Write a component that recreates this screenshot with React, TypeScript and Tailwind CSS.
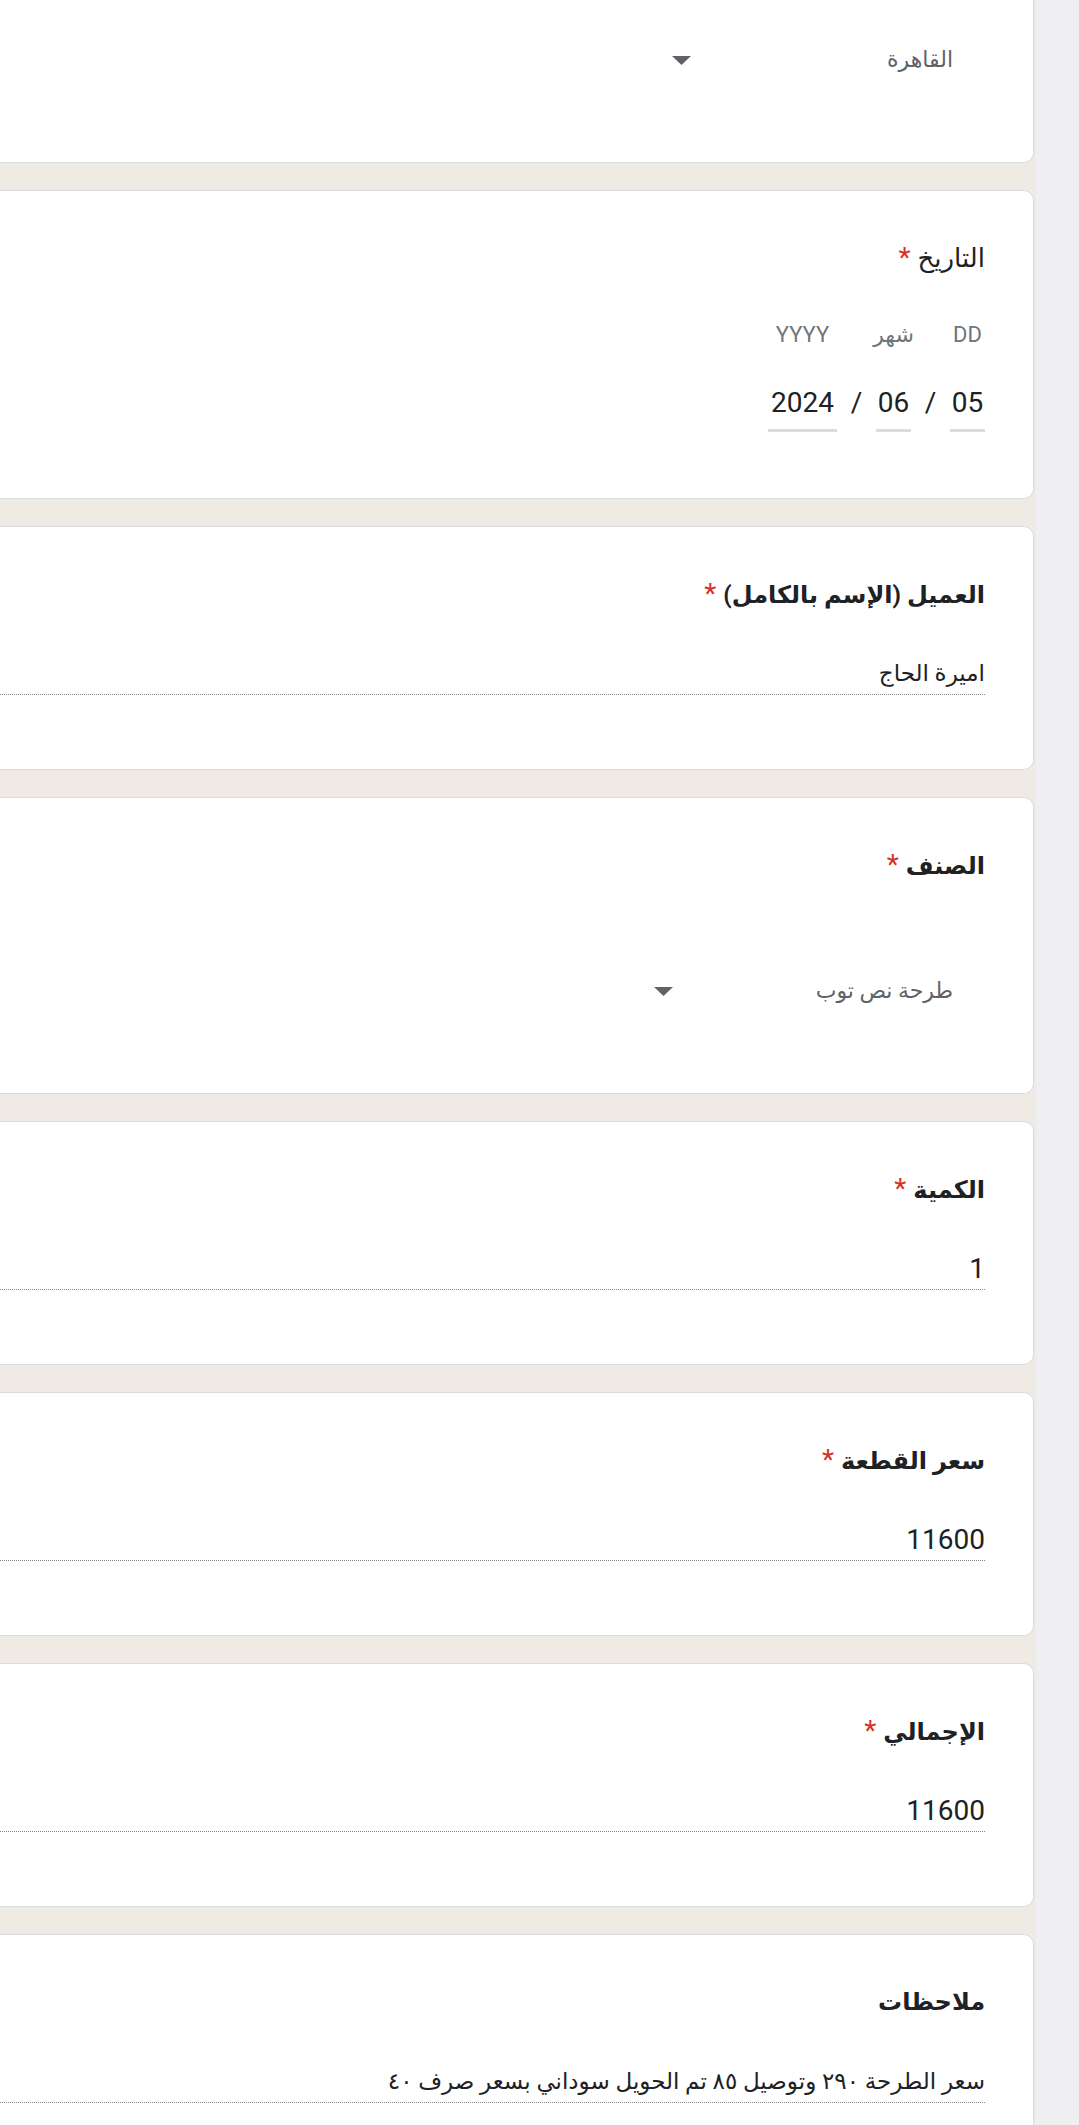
import React from "react"

const font = "font-['Roboto','DejaVu_Sans',sans-serif]"

function Star() {
    return <span className="text-[28px] font-normal text-[#d93025] font-['Roboto',sans-serif]"> *</span>
}

function Arrow() {
    return (
        <svg width="19" height="9" viewBox="0 0 19 9" className="shrink-0">
            <path d="M0 0 L19 0 L9.5 9 Z" fill="#5f6368" />
        </svg>
    )
}

function Dropdown({ value, width }: { value: string; width: string }) {
    return (
        <div className="flex h-[40px] items-center pr-[32px]">
            <span className={`${width} text-[22px] leading-[40px] text-[#5f6368]`}>{value}</span>
            <Arrow />
        </div>
    )
}

function Title({ text, required = true, bold = true }: { text: string; required?: boolean; bold?: boolean }) {
    return (
        <div className={`h-[40px] leading-[40px] text-[#202124] ${bold ? "text-[24px] font-bold" : "text-[26px] font-normal"}`}>
            {text}
            {required && <Star />}
        </div>
    )
}

function Card({ children, className = "" }: { children: React.ReactNode; className?: string }) {
    return (
        <div className={`mr-[2px] shrink-0 rounded-r-[10px] border-y border-r border-[#dadce0] bg-white pr-[48px] ${className}`}>
            {children}
        </div>
    )
}

function TextCard({ title, value, required = true, arabic = false }: { title: string; value: string; required?: boolean; arabic?: boolean }) {
    return (
        <Card className="h-[244px] pt-[47px]">
            <Title text={title} required={required} />
            <div className={`mt-[40px] h-[41px] border-b border-dotted border-[#80868b] leading-[40px] text-[#202124] ${arabic ? "text-[23px]" : "text-[28px]"}`}>
                {value}
            </div>
        </Card>
    )
}

function DatePart({ label, value, width }: { label: string; value: string; width: string }) {
    return (
        <div className={`flex flex-col items-center ${width}`}>
            <div className="h-[30px] text-[22px] leading-[30px] text-[#70757a]">{label}</div>
            <div className="mt-[32px] h-[42px] text-[28px] leading-[42px] text-[#202124]">{value}</div>
            <div className="mt-[5px] h-[3px] w-full bg-[#dadce0]" />
        </div>
    )
}

function Slash() {
    return (
        <div className="flex w-[39px] flex-col items-center">
            <div className="h-[30px]" />
            <div className="mt-[32px] h-[42px] text-[28px] leading-[42px] text-[#202124]">/</div>
        </div>
    )
}

export default function App() {
    return (
        <div className={`flex h-[2125px] w-[1079px] overflow-hidden bg-[#efeff1] ${font}`}>
            <div dir="rtl" className="flex w-[1036px] shrink-0 flex-col gap-[27px] bg-[#efebe4]">
                <div className="mr-[2px] h-[163px] shrink-0 rounded-br-[10px] border-b border-r border-[#dadce0] bg-white pr-[48px] pt-[40px]">
                    <Dropdown value="القاهرة" width="w-[262px]" />
                </div>

                <Card className="h-[309px] pt-[47px]">
                    <Title text="التاريخ" bold={false} />
                    <div className="mt-[42px] flex">
                        <DatePart label="DD" value="05" width="w-[35px]" />
                        <Slash />
                        <DatePart label="شهر" value="06" width="w-[35px]" />
                        <Slash />
                        <DatePart label="YYYY" value="2024" width="w-[69px]" />
                    </div>
                </Card>

                <TextCard title="العميل (الإسم بالكامل)" value="اميرة الحاج" arabic />

                <Card className="h-[297px] pt-[47px]">
                    <Title text="الصنف" />
                    <div className="mt-[86px]">
                        <Dropdown value="طرحة نص توب" width="w-[280px]" />
                    </div>
                </Card>

                <TextCard title="الكمية" value="1" />
                <TextCard title="سعر القطعة" value="11600" />
                <TextCard title="الإجمالي" value="11600" />
                <TextCard title="ملاحظات" value="سعر الطرحة ٢٩٠ وتوصيل ٨٥ تم الحويل سوداني بسعر صرف ٤٠" required={false} arabic />
            </div>
        </div>
    )
}
